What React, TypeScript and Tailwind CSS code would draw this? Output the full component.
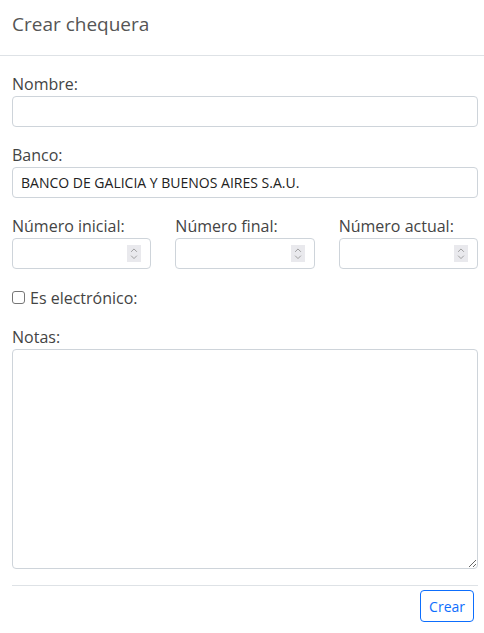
import { ChevronDown, ChevronUp } from 'lucide-react';

function NumberField({ label }: { label: string }) {
    return (
        <div className="flex flex-col">
            <label className="h-[23px] text-[16px] leading-[23px] text-[#444]">{label}</label>
            <div className="flex h-[31px] items-center justify-end rounded border border-[#ced4da] bg-white pr-[9px]">
                <div className="flex h-[17px] w-[14px] flex-col items-center justify-center bg-[#e9e9ed] text-[#777]">
                    <ChevronUp className="-mb-[2px] h-[12px] w-[12px]" strokeWidth={1.5} />
                    <ChevronDown className="-mt-[2px] h-[12px] w-[12px]" strokeWidth={1.5} />
                </div>
            </div>
        </div>
    );
}

export default function App() {
    return (
        <div className="h-[633px] w-[484px] bg-white font-['Open_Sans',sans-serif] text-[#444]">
            <header className="flex h-[56px] items-center border-b border-[#dee2e6] px-3">
                <h1 className="pb-[6px] text-[19px] text-[#555]">Crear chequera</h1>
            </header>

            <div className="pl-3 pr-[6px] pt-[17px]">
                <label className="block h-[23px] text-[16px] leading-[23px]">Nombre:</label>
                <input className="block h-[31px] w-full rounded border border-[#ced4da] px-2 text-[14px] outline-none" />

                <label className="mt-[17px] block h-[23px] text-[16px] leading-[23px]">Banco:</label>
                <div className="flex h-[31px] w-full items-center rounded border border-[#ced4da] px-2 text-[14px] text-[#222]">
                    BANCO DE GALICIA Y BUENOS AIRES S.A.U.
                </div>

                <div className="mt-[17px] grid grid-cols-3 gap-6">
                    <NumberField label="Número inicial:" />
                    <NumberField label="Número final:" />
                    <NumberField label="Número actual:" />
                </div>

                <div className="mt-[17px] flex h-[23px] items-center gap-[5px] text-[16px]">
                    <span className="h-[13px] w-[13px] rounded-[3px] border border-[#767676] bg-white" />
                    <span>Es electrónico:</span>
                </div>

                <label className="mt-[17px] block h-[23px] text-[16px] leading-[23px]">Notas:</label>
                <textarea className="block h-[220px] w-full resize-y rounded border border-[#ced4da] px-2 text-[14px] outline-none" />

                <div className="mt-[16px] flex justify-end border-t border-[#dee2e6] pt-[4px]">
                    <button className="mr-[4px] h-[32px] rounded border border-[#0d6efd] px-[8px] text-[14px] text-[#0d6efd]">
                        Crear
                    </button>
                </div>
            </div>
        </div>
    );
}
